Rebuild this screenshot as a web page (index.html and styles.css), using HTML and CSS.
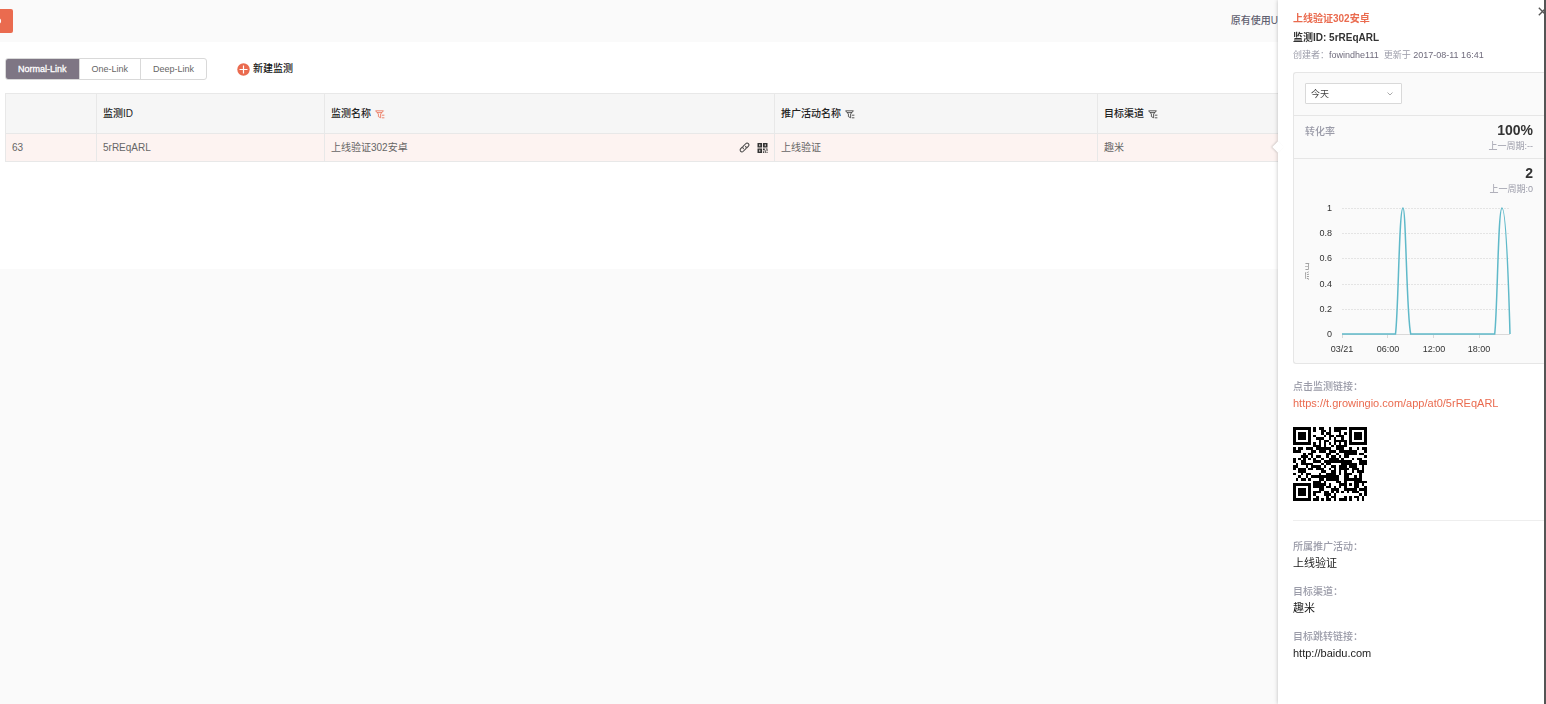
FILE: index.html
```html
<!DOCTYPE html>
<html lang="zh-CN">
<head>
	<meta charset="UTF-8">
	<title>监测链接</title>
	<link rel="stylesheet" href="styles.css">
	<script src="qrcode.js"></script>
	<script>
		window.onload=function(){
			var link=document.getElementById('trackLink');
			drawCode(document.getElementById('qrcode'),link.innerHTML);
		}
	</script>
</head>
<body>
	<div class="topbar">
		<button type="button" class="back" aria-label="返回">
			<svg width="2" height="6" viewBox="0 0 2 6"><path d="M0 0.8Q1.4 3 0 5.2" fill="none" stroke="#fff"/></svg>
		</button>
		<a href="#" class="old">原有使用U</a>
	</div>
	<div class="content">
		<div class="tools">
			<div class="tabs">
				<button type="button" class="on">Normal-Link</button>
				<button type="button">One-Link</button>
				<button type="button">Deep-Link</button>
			</div>
			<button type="button" class="add">
				<svg width="13" height="13" viewBox="0 0 13 13"><circle cx="6.5" cy="6.5" r="6.2" fill="#ea6b4f"/><path d="M6.5 2.5V10.5M2.5 6.5H10.5" stroke="#fff" stroke-width="1.2"/></svg>
				新建监测
			</button>
		</div>
		<table class="list">
			<colgroup>
				<col class="c-no"><col class="c-id"><col class="c-name"><col class="c-act"><col>
			</colgroup>
			<thead>
				<tr>
					<th></th>
					<th>监测ID</th>
					<th>监测名称 <svg class="filter red" viewBox="0 0 10 9"><path d="M0.6 0.8H8.4L5.6 4V7.8L3.4 6.6V4ZM2 2.6H7M6.8 5.2H9.4M6.8 7.8H9.4"/></svg></th>
					<th>推广活动名称 <svg class="filter" viewBox="0 0 10 9"><path d="M0.6 0.8H8.4L5.6 4V7.8L3.4 6.6V4ZM2 2.6H7M6.8 5.2H9.4M6.8 7.8H9.4"/></svg></th>
					<th>目标渠道 <svg class="filter" viewBox="0 0 10 9"><path d="M0.6 0.8H8.4L5.6 4V7.8L3.4 6.6V4ZM2 2.6H7M6.8 5.2H9.4M6.8 7.8H9.4"/></svg></th>
				</tr>
			</thead>
			<tbody>
				<tr>
					<td>63</td>
					<td>5rREqARL</td>
					<td>
						<div class="name">
							<span>上线验证302安卓</span>
							<svg width="11" height="11" viewBox="0 0 12 12"><g fill="none" stroke="#444" stroke-width="1.1" stroke-linecap="round"><path d="M4.8 7.2C3.8 6.2 4 5.2 4.7 4.5L7.3 1.9C8.2 1 9.4 1 10.2 1.8C11 2.6 11 3.8 10.1 4.7L8.5 6.3"/><path d="M7.2 4.8C8.2 5.8 8 6.8 7.3 7.5L4.7 10.1C3.8 11 2.6 11 1.8 10.2C1 9.4 1 8.2 1.9 7.3L3.5 5.7"/></g></svg>
							<svg width="11" height="10" viewBox="0 0 11 11"><path fill="#333" fill-rule="evenodd" d="M0 0H5V5H0ZM2 1.5V3.5H3V1.5ZM6 0H11V5H6ZM8 1.5V3.5H9V1.5ZM0 6H5V11H0ZM2 7.5V9.5H3V7.5ZM6 6H8V8H6ZM9 6H11V9H10V7H9ZM6 9H7V11H6ZM8 8H9V11H8ZM10 10H11V11H10Z"/></svg>
						</div>
					</td>
					<td>上线验证</td>
					<td>趣米</td>
				</tr>
			</tbody>
		</table>
	</div>

	<div class="panel">
		<button type="button" class="close" aria-label="关闭">
			<svg width="6" height="9" viewBox="0 0 6 9"><path d="M0.8 0.8L8.2 8.2M8.2 0.8L0.8 8.2" stroke="#555" stroke-width="1.3"/></svg>
		</button>
		<h1>上线验证302安卓</h1>
		<h2>监测ID: 5rREqARL</h2>
		<p class="meta">创建者：<span>fowindhe111</span>&nbsp; 更新于 <span>2017-08-11 16:41</span></p>
		<div class="card">
			<div class="day">
				<select aria-label="时间">
					<option>今天</option>
				</select>
				<svg width="6" height="4" viewBox="0 0 6 4"><path d="M0.5 0.5L3 3L5.5 0.5" fill="none" stroke="#aaa"/></svg>
			</div>
			<div class="stat">
				<span class="label">转化率</span>
				<div class="num">
					<b>100%</b>
					<span>上一周期:--</span>
				</div>
			</div>
			<div class="stat">
				<span class="label"></span>
				<div class="num">
					<b>2</b>
					<span>上一周期:0</span>
				</div>
			</div>
			<svg class="chart" width="220" height="157" viewBox="0 1 220 157">
				<text class="unit" transform="translate(3 80) rotate(-90)">点击</text>
				<path class="grid" d="M37 8.500H205M37 33.500H205M37 58.500H205M37 84.500H205M37 109.500H205"/>
				<path class="axis" d="M37 134.500H205M37.500 134V138M82.500 134V138M128.500 134V138M174.500 134V138"/>
				<path class="line" d="M37 134H90.500C93.500 110 94 8 98 8C101 8 101.500 115 105.700 134H189.700C192.500 110 193 8 197 8C201 8 203.500 80 205 134"/>
				<g class="y">
					<text x="27" y="11">1</text>
					<text x="27" y="36">0.8</text>
					<text x="27" y="61">0.6</text>
					<text x="27" y="87">0.4</text>
					<text x="27" y="112">0.2</text>
					<text x="27" y="137">0</text>
				</g>
				<g class="x">
					<text x="37" y="152">03/21</text>
					<text x="83" y="152">06:00</text>
					<text x="129" y="152">12:00</text>
					<text x="174" y="152">18:00</text>
				</g>
			</svg>
		</div>
		<dl class="track">
			<dt>点击监测链接：</dt>
			<dd><a href="#" id="trackLink">https://t.growingio.com/app/at0/5rREqARL</a></dd>
		</dl>
		<svg id="qrcode" class="qrcode" viewBox="0 0 29 29" shape-rendering="crispEdges"></svg>
		<dl class="info">
			<dt>所属推广活动：</dt>
			<dd>上线验证</dd>
			<dt>目标渠道：</dt>
			<dd>趣米</dd>
			<dt>目标跳转链接：</dt>
			<dd>http://baidu.com</dd>
		</dl>
	</div>
</body>
</html>
```
FILE: styles.css
```css
*{
	box-sizing: border-box;
}
html,body{
	height: 100%;overflow: hidden;margin: 0;padding: 0;
}
body{
	background: #fafafa;
	font-family: "Liberation Sans","Noto Sans CJK SC",sans-serif;
	font-size: 10px;line-height: 16px;color: #333;
}
button{
	padding: 0;border: 0;background: none;
	font: inherit;color: inherit;cursor: pointer;
}
svg{
	display: block;flex: none;
}
a{
	text-decoration: none;
}
h1,h2,p,dl,dd{
	margin: 0;font-size: 10px;
}
/*顶部*/
.topbar{
	display: flex;align-items: center;justify-content: space-between;
	height: 42px;padding-right: 268px;
}
.back{
	width: 13px;height: 24px;
	border-radius: 0 2px 2px 0;background: #ea6b4f;
}
.old{
	color: #5f6070;white-space: nowrap;font-weight: 500;
}
/*列表*/
.content{
	height: 227px;padding: 16px 0 0 5px;background: #fff;
}
.tools{
	display: flex;align-items: center;
}
.tabs{
	display: flex;
	height: 22px;border: 1px solid #d9d9d9;border-radius: 3px;overflow: hidden;
}
.tabs button{
	padding: 0 12px;
	font-size: 9px;color: #666;
}
.tabs button+button{
	border-left: 1px solid #d9d9d9;
}
.tabs .on{
	background: #7e7684;color: #fff;
	-webkit-text-stroke: .3px #fff;
}
.add{
	display: flex;align-items: center;gap: 3px;
	margin-left: 30px;color: #111;font-weight: 500;
}
.list{
	width: 100%;margin-top: 13px;
	table-layout: fixed;border-collapse: collapse;
}
.c-no{width: 91px;}
.c-id{width: 228px;}
.c-name{width: 450px;}
.c-act{width: 323px;}
.list th,.list td{
	padding: 0 6px;border: 1px solid #e8e8e8;
	text-align: left;
}
.list th{
	height: 40px;background: #f6f6f6;font-weight: 500;color: #222;
}
.list td{
	height: 28px;background: #fdf3f1;color: #666;
}
.filter{
	display: inline-block;width: 10px;height: 9px;margin-left: 1px;vertical-align: -2px;
	fill: none;stroke: #333;stroke-width: .8;
}
.filter.red{
	stroke: #ea6b4f;
}
.name{
	display: flex;align-items: center;gap: 7px;
}
.name span{
	flex: 1;
}
/*右侧详情*/
.panel{
	position: fixed;top: 0;right: 0;bottom: 0;
	width: 268px;padding: 10px 0 0 15px;
	background: #fff;border-right: 2px solid #555;
	box-shadow: 0 0 4px rgba(0,0,0,.25);
}
.panel:before{
	content: "";
	position: absolute;top: 143px;left: -4px;
	width: 8px;height: 8px;background: #fff;
	transform: rotate(45deg);
	box-shadow: -1px 1px 2px rgba(0,0,0,.15);
}
.close{
	position: absolute;top: 7px;right: 0;
}
.panel h1{
	line-height: 17px;color: #ea6b4f;
}
.panel h2{
	line-height: 21px;
}
.meta{
	font-size: 9px;line-height: 15px;color: #9a9ba8;white-space: nowrap;
}
.meta span{
	color: #6f6b7c;
}
.card{
	margin-top: 9px;
	border: 1px solid #e6e6e6;border-right: 0;border-radius: 3px 0 0 3px;background: #fafafa;
}
.day{
	position: relative;
	padding: 10px 11px 11px;
}
.day select{
	display: block;width: 97px;height: 21px;padding: 0 5px;
	-webkit-appearance: none;appearance: none;
	border: 1px solid #d9d9d9;border-radius: 1px;background: #fff;
	font: 9px "Liberation Sans","Noto Sans CJK SC",sans-serif;color: #444;
}
.day svg{
	position: absolute;top: 19px;left: 93px;
}
.stat{
	display: flex;justify-content: space-between;
	padding: 5px 11px;border-top: 1px solid #e6e6e6;
}
.stat .label{
	line-height: 22px;color: #9a9ba8;font-weight: 500;
}
.num{
	text-align: right;
}
.num b,.num span{
	display: block;
}
.num b{
	font-size: 14px;line-height: 18px;
}
.num span{
	font-size: 9px;line-height: 14px;color: #9a9ba8;
}
.chart{
	margin: 0 0 5px 11px;overflow: hidden;
}
.chart text{
	font-size: 9px;fill: #333;
}
.chart .unit{
	fill: #888;
}
.chart .y{
	text-anchor: end;
}
.chart .x{
	text-anchor: middle;
}
.grid{
	stroke: #e4e4e4;stroke-dasharray: 2 1;
}
.axis{
	stroke: #d9d9d9;
}
.line{
	fill: none;stroke: #5fb9c9;stroke-width: 1.5;
}
dt{
	color: #9a9ba8;font-weight: 500;
}
dd{
	font-size: 11px;line-height: 17px;
}
.track{
	margin-top: 15px;
}
.track a{
	color: #ea6b4f;
}
.qrcode{
	width: 74px;height: 74px;margin: 15px 0 19px;
}
.info{
	padding-top: 18px;border-top: 1px solid #eee;color: #222;
}
.info dd{
	font-size: 11px;margin-bottom: 12px;
}
```
FILE: qrcode.js
```js
//二维码 version 3, 纠错等级M
var N=29;
var dataLen=44;
var eccLen=26;

//GF(256)
var exp=[],log=[];
for(var i=0,v=1;i<255;i++){
	exp[i]=v;
	log[v]=i;
	v<<=1;
	if(v>255){v^=0x11d;}
}
function mul(a,b){
	return a&&b?exp[(log[a]+log[b])%255]:0;
}
function toBits(n,len){
	var s='';
	for(var i=len-1;i>=0;i--){s+=(n>>i)&1;}
	return s;
}

//数据+纠错码
function encode(text){
	var i,j;
	var bits=toBits(4,4)+toBits(text.length,8);
	for(i=0;i<text.length;i++){bits+=toBits(text.charCodeAt(i),8);}
	bits+='0000';
	var words=[];
	for(i=0;i<bits.length;i+=8){words.push(parseInt(bits.substr(i,8),2));}
	for(i=0;words.length<dataLen;i++){words.push(i%2?0x11:0xec);}
	var gen=[1];
	for(i=0;i<eccLen;i++){
		var next=gen.concat(0);
		for(j=0;j<gen.length;j++){next[j+1]^=mul(gen[j],exp[i]);}
		gen=next;
	}
	var rem=words.slice();
	for(i=0;i<eccLen;i++){rem.push(0);}
	for(i=0;i<dataLen;i++){
		var f=rem[i];
		for(j=0;j<gen.length;j++){rem[i+j]^=mul(gen[j],f);}
	}
	bits='';
	words.concat(rem.slice(dataLen)).forEach(function(w){bits+=toBits(w,8);});
	return bits+'0000000';
}

var masks=[
	function(r,c){return (r+c)%2;},
	function(r,c){return r%2;},
	function(r,c){return c%3;},
	function(r,c){return (r+c)%3;},
	function(r,c){return ((r>>1)+Math.floor(c/3))%2;},
	function(r,c){return r*c%2+r*c%3;},
	function(r,c){return (r*c%2+r*c%3)%2;},
	function(r,c){return (r*c%3+(r+c)%2)%2;}
];

function build(bits,mask){
	var m=[],i,j,x,y;
	for(i=0;i<N;i++){m[i]=[];}
	function finder(r,c){
		for(var y=-1;y<8;y++){
			for(var x=-1;x<8;x++){
				if(r+y<0||r+y>=N||c+x<0||c+x>=N){continue;}
				var d=Math.max(Math.abs(y-3),Math.abs(x-3));
				m[r+y][c+x]=d!=2&&d!=4?1:0;
			}
		}
	}
	finder(0,0);
	finder(0,N-7);
	finder(N-7,0);
	for(y=-2;y<3;y++){
		for(x=-2;x<3;x++){
			m[22+y][22+x]=Math.max(Math.abs(y),Math.abs(x))!=1?1:0;
		}
	}
	for(i=8;i<N-8;i++){
		m[6][i]=m[i][6]=i%2?0:1;
	}
	//格式信息
	var info=mask<<10;
	var r=info;
	for(i=14;i>=10;i--){
		if(r>>i&1){r^=0x537<<(i-10);}
	}
	info=(info|r)^0x5412;
	for(i=0;i<15;i++){
		var b=info>>i&1;
		m[i<6?i:i<8?i+1:N-15+i][8]=b;
		m[8][i<8?N-1-i:i==8?7:14-i]=b;
	}
	m[N-8][8]=1;
	var k=0,up=true;
	for(var c=N-1;c>0;c-=2){
		if(c==6){c--;}
		for(i=0;i<N;i++){
			var row=up?N-1-i:i;
			for(j=0;j<2;j++){
				if(m[row][c-j]===undefined){
					m[row][c-j]=bits[k++]^(masks[mask](row,c-j)?0:1);
				}
			}
		}
		up=!up;
	}
	return m;
}

//掩码评分, 越小越好
function penalty(m){
	var p=0,dark=0,lines=[];
	for(var i=0;i<N;i++){
		lines.push(m[i].join(''));
		lines.push(m.map(function(r){return r[i];}).join(''));
	}
	lines.forEach(function(s){
		(s.match(/0{5,}|1{5,}/g)||[]).forEach(function(t){p+=t.length-2;});
		for(var i=0;i<=N-11;i++){
			var t=s.substr(i,11);
			if(t=='10111010000'||t=='00001011101'){p+=40;}
		}
	});
	for(var y=0;y<N;y++){
		for(var x=0;x<N;x++){
			dark+=m[y][x];
			if(y&&x&&m[y][x]==m[y-1][x]&&m[y][x]==m[y][x-1]&&m[y][x]==m[y-1][x-1]){p+=3;}
		}
	}
	return p+Math.floor(Math.abs(dark*100/(N*N)-50)/5)*10;
}

function drawCode(svg,text){
	var bits=encode(text);
	var best,min=Infinity;
	for(var k=0;k<8;k++){
		var m=build(bits,k);
		var p=penalty(m);
		if(p<min){min=p;best=m;}
	}
	var d='';
	for(var y=0;y<N;y++){
		for(var x=0;x<N;x++){
			if(best[y][x]){d+='M'+x+' '+y+'h1v1h-1z';}
		}
	}
	var path=document.createElementNS('http://www.w3.org/2000/svg','path');
	path.setAttribute('d',d);
	svg.appendChild(path);
}
```
